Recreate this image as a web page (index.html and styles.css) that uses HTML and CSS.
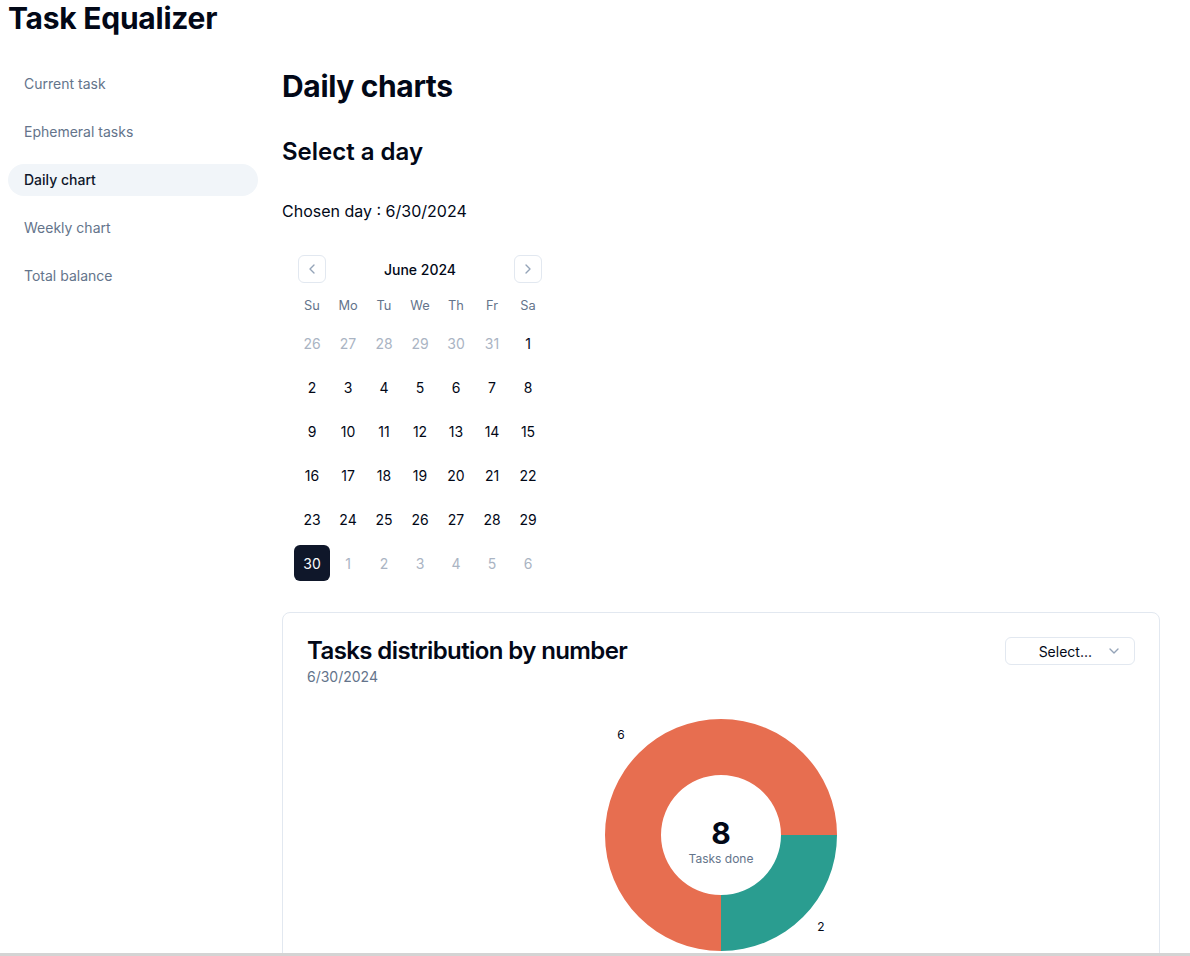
FILE: index.html
```html
<!DOCTYPE html>
<html lang="en">
  <head>
    <meta charset="UTF-8" />
    <meta name="viewport" content="width=device-width, initial-scale=1.0" />
    <title>Task Equalizer</title>
    <link rel="stylesheet" href="styles.css">
  </head>
  <body>
    <h1 class="brand">Task Equalizer</h1>
    <div class="layout">
      <nav class="sidebar">
        <a class="nav-item" href="#">Current task</a>
        <a class="nav-item" href="#">Ephemeral tasks</a>
        <a class="nav-item active" href="#">Daily chart</a>
        <a class="nav-item" href="#">Weekly chart</a>
        <a class="nav-item" href="#">Total balance</a>
      </nav>

      <main class="main">
        <h2 class="page-title">Daily charts</h2>
        <h3 class="section-title">Select a day</h3>
        <p class="chosen">Chosen day : 6/30/2024</p>

        <div class="calendar">
          <div class="caption">
            <button class="nav-btn prev">
              <svg width="16" height="16" viewBox="0 0 24 24" fill="none" stroke="currentColor" stroke-width="2" stroke-linecap="round" stroke-linejoin="round"><path d="m15 18-6-6 6-6"/></svg>
            </button>
            <span class="month">June 2024</span>
            <button class="nav-btn next">
              <svg width="16" height="16" viewBox="0 0 24 24" fill="none" stroke="currentColor" stroke-width="2" stroke-linecap="round" stroke-linejoin="round"><path d="m9 18 6-6-6-6"/></svg>
            </button>
          </div>
          <div class="weekdays">
            <span>Su</span><span>Mo</span><span>Tu</span><span>We</span><span>Th</span><span>Fr</span><span>Sa</span>
          </div>
          <div class="week">
            <span class="day outside">26</span><span class="day outside">27</span><span class="day outside">28</span><span class="day outside">29</span><span class="day outside">30</span><span class="day outside">31</span><span class="day">1</span>
          </div>
          <div class="week">
            <span class="day">2</span><span class="day">3</span><span class="day">4</span><span class="day">5</span><span class="day">6</span><span class="day">7</span><span class="day">8</span>
          </div>
          <div class="week">
            <span class="day">9</span><span class="day">10</span><span class="day">11</span><span class="day">12</span><span class="day">13</span><span class="day">14</span><span class="day">15</span>
          </div>
          <div class="week">
            <span class="day">16</span><span class="day">17</span><span class="day">18</span><span class="day">19</span><span class="day">20</span><span class="day">21</span><span class="day">22</span>
          </div>
          <div class="week">
            <span class="day">23</span><span class="day">24</span><span class="day">25</span><span class="day">26</span><span class="day">27</span><span class="day">28</span><span class="day">29</span>
          </div>
          <div class="week">
            <span class="day selected">30</span><span class="day outside">1</span><span class="day outside">2</span><span class="day outside">3</span><span class="day outside">4</span><span class="day outside">5</span><span class="day outside">6</span>
          </div>
        </div>

        <section class="card">
          <div class="card-header">
            <div>
              <h3 class="card-title">Tasks distribution by number</h3>
              <p class="card-desc">6/30/2024</p>
            </div>
            <button class="select">
              <span>Select...</span>
              <svg width="16" height="16" viewBox="0 0 24 24" fill="none" stroke="currentColor" stroke-width="2" stroke-linecap="round" stroke-linejoin="round"><path d="m6 9 6 6 6-6"/></svg>
            </button>
          </div>
          <div class="chart">
            <svg class="donut" width="300" height="260" viewBox="0 0 300 260">
              <path d="M 266 130 A 116 116 0 1 0 150 246 L 150 190 A 60 60 0 1 1 210 130 Z" fill="#e76e50"/>
              <path d="M 150 246 A 116 116 0 0 0 266 130 L 210 130 A 60 60 0 0 1 150 190 Z" fill="#2a9d90"/>
              <text class="label" x="50" y="34" text-anchor="middle">6</text>
              <text class="label" x="250" y="226" text-anchor="middle">2</text>
              <text class="total" x="150" y="139" text-anchor="middle">8</text>
              <text class="total-sub" x="150" y="158" text-anchor="middle">Tasks done</text>
            </svg>
          </div>
        </section>
      </main>
    </div>
    <div class="scroll-edge"></div>
  </body>
</html>
```

FILE: styles.css
```css
body {
  margin: 0;
  padding: 0 8px;
  font-family: Inter, "Noto Sans", sans-serif;
  color: #020817;
  background-color: #ffffff;
}

.brand {
  margin: 0;
  font-size: 30px;
  line-height: 36px;
  font-weight: 700;
  letter-spacing: -0.25px;
}

.layout {
  display: grid;
  grid-template-columns: 250px 1fr;
  gap: 24px;
  padding-top: 32px;
}

/* sidebar */
.sidebar {
  display: flex;
  flex-direction: column;
  gap: 16px;
}
.nav-item {
  display: block;
  height: 32px;
  line-height: 32px;
  padding: 0 16px;
  border-radius: 16px;
  font-size: 14px;
  color: #64748b;
  text-decoration: none;
}
.nav-item.active {
  background-color: #f1f5f9;
  color: #0f172a;
  font-weight: 500;
}

/* main */
.main {
  padding-right: 22px;
}
.page-title {
  margin: 0;
  font-size: 30px;
  line-height: 36px;
  font-weight: 700;
  letter-spacing: -0.35px;
}
.section-title {
  margin: 32px 0 0;
  font-size: 24px;
  line-height: 32px;
  font-weight: 600;
}
.chosen {
  margin: 31px 0 0;
  font-size: 16px;
  line-height: 24px;
}

/* calendar */
.calendar {
  width: 252px;
  padding: 12px;
  margin-top: 16px;
}
.caption {
  position: relative;
  display: flex;
  justify-content: center;
  align-items: center;
  height: 28px;
  padding-top: 4px;
}
.month {
  font-size: 14px;
  font-weight: 500;
}
.nav-btn {
  position: absolute;
  top: 4px;
  width: 28px;
  height: 28px;
  padding: 0;
  display: flex;
  align-items: center;
  justify-content: center;
  border: 1px solid #e2e8f0;
  border-radius: 6px;
  background: #ffffff;
  color: #94a3b8;
}
.nav-btn.prev {
  left: 4px;
}
.nav-btn.next {
  right: 4px;
}
.weekdays {
  display: flex;
  margin-top: 12px;
}
.weekdays span {
  width: 36px;
  text-align: center;
  font-size: 12.8px;
  line-height: 22px;
  color: #64748b;
}
.week {
  display: flex;
  margin-top: 8px;
}
.day {
  width: 36px;
  height: 36px;
  display: flex;
  align-items: center;
  justify-content: center;
  font-size: 14px;
  border-radius: 6px;
}
.day.outside {
  color: #aab4c3;
}
.day.selected {
  background-color: #0f172a;
  color: #f8fafc;
}

/* card */
.card {
  margin-top: 19px;
  border: 1px solid #e2e8f0;
  border-radius: 8px;
  padding: 24px;
  height: 400px;
}
.card-header {
  display: flex;
  justify-content: space-between;
  align-items: flex-start;
}
.card-title {
  margin: 0;
  font-size: 24px;
  line-height: 28px;
  font-weight: 600;
  letter-spacing: -0.6px;
}
.card-desc {
  margin: 2px 0 0;
  font-size: 14px;
  line-height: 20px;
  color: #64748b;
}
.select {
  width: 130px;
  height: 28px;
  display: flex;
  align-items: center;
  justify-content: flex-end;
  gap: 14px;
  padding: 0 12px;
  border: 1px solid #e2e8f0;
  border-radius: 6px;
  background: #ffffff;
  font-family: Inter, "Noto Sans", sans-serif;
  font-size: 14px;
  color: #020817;
}
.select svg {
  color: #94a3b8;
}
.chart {
  display: flex;
  justify-content: center;
  margin-top: 18px;
}
.label {
  font-size: 12px;
  fill: #020817;
}
.total {
  font-size: 30px;
  font-weight: 700;
  fill: #020817;
}
.total-sub {
  font-size: 12px;
  fill: #64748b;
}

.scroll-edge {
  position: fixed;
  left: 0;
  right: 0;
  bottom: 0;
  height: 3px;
  background-color: #d4d4d4;
}
```
